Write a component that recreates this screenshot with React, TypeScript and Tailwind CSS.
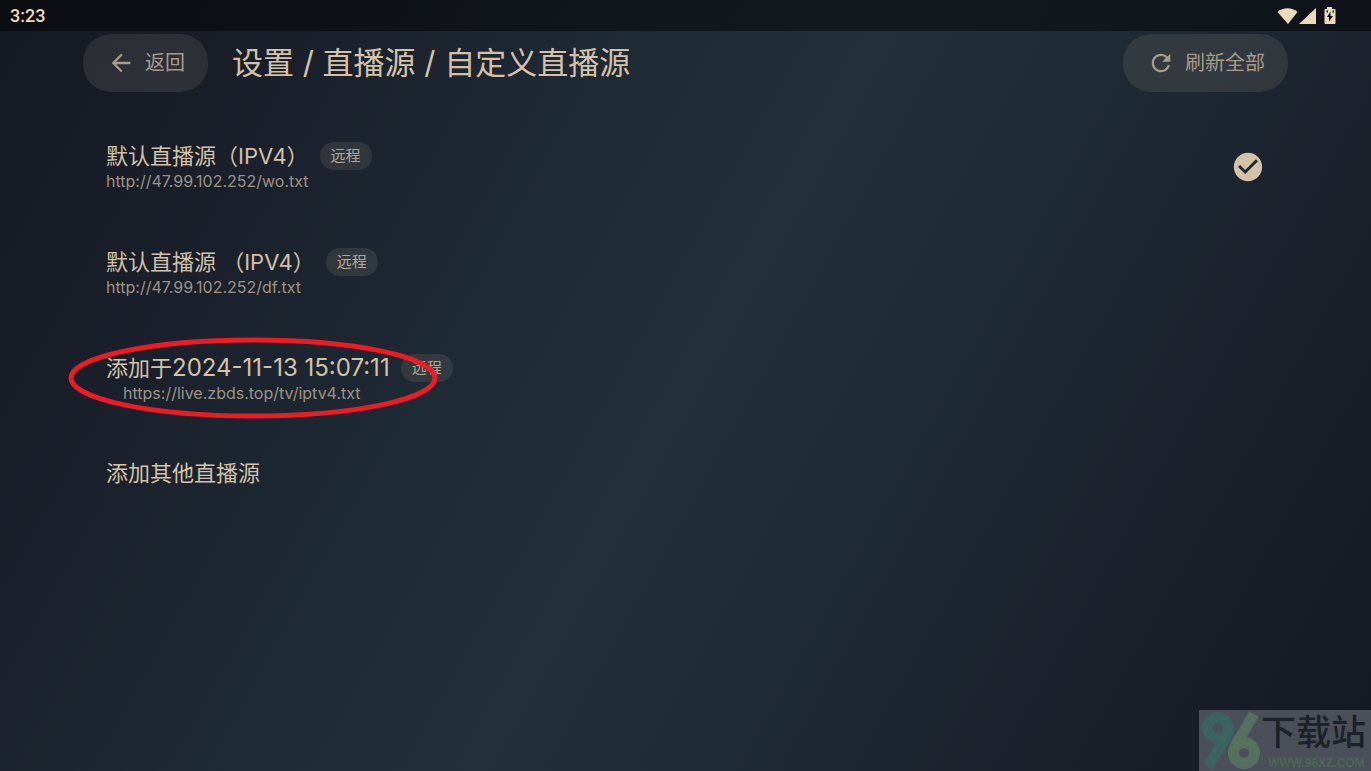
import { MdArrowBack, MdCheckCircle, MdRefresh } from "react-icons/md";

interface Source {
  name: string;
  addedAt?: string;
  url: string;
  selected?: boolean;
  indent?: boolean;
}

const sources: Source[] = [
  { name: "默认直播源（IPV4）", url: "http://47.99.102.252/wo.txt", selected: true },
  { name: "默认直播源 （IPV4）", url: "http://47.99.102.252/df.txt" },
  { name: "添加于", addedAt: "2024-11-13 15:07:11", url: "https://live.zbds.top/tv/iptv4.txt", indent: true },
];

export default function App() {
  return (
    <div className="relative min-h-screen overflow-hidden bg-[linear-gradient(119deg,#141822_0%,#1b212c_20%,#1e2a34_36%,#22303b_50%,#1e2a34_64%,#1b202b_82%,#141822_100%)] font-['Inter','Noto_Sans_CJK_SC',sans-serif] text-[#d3c2a7]">
      <StatusBar />

      <header className="flex items-center gap-6 px-[83px] pt-[3px]">
        <button className="flex h-[58px] items-center gap-[10px] rounded-[28px] bg-[#e9d6b8]/10 pr-[23px] pl-6 text-xl text-[#a79c8a]">
          <MdArrowBack className="size-7" />
          返回
        </button>
        <h1 className="flex-1 text-[31px] leading-[46px]">设置 / 直播源 / 自定义直播源</h1>
        <button className="flex h-[58px] items-center gap-[10px] rounded-[28px] bg-[#e9d6b8]/10 pr-[23px] pl-6 text-xl text-[#a79c8a]">
          <MdRefresh className="size-7" />
          刷新全部
        </button>
      </header>

      <main className="px-[106px] pt-12">
        <ul>
          {sources.map((source) => (
            <SourceRow key={source.url} source={source} />
          ))}
        </ul>
        <button className="text-[22px] leading-[30px]">添加其他直播源</button>
      </main>

      <Highlight />
      <Watermark />
    </div>
  );
}

function StatusBar() {
  return (
    <div className="flex h-[31px] items-center justify-between bg-black/45 pr-[35px] pl-[10px] text-[#ecdabd]">
      <span className="font-['Roboto',sans-serif] text-lg font-medium">3:23</span>
      <svg className="h-[18px] w-[59px]" viewBox="0 0 59 18" fill="currentColor" aria-hidden="true">
        {/* wifi */}
        <path d="M0.5 5C6 0 15 0 20.500 5L11 17Z" />
        {/* signal */}
        <path d="M22 17L39 1V17Z" />
        {/* charging battery */}
        <path
          fillRule="evenodd"
          d="M50 0h5v2h2.500q1 0 1 1v13q0 1-1 1h-9q-1 0-1-1V3q0-1 1-1H50zM53.500 4.500L50 10H52V14.500L56 9H53.500zM49.500 3.500v2h1.500v-2zM55.500 3.500v2h1.500v-2z"
        />
      </svg>
    </div>
  );
}

function SourceRow({ source }: { source: Source }) {
  return (
    <li className="flex h-[106px] items-start justify-between">
      <div>
        <div className="flex h-8 items-center gap-[11px]">
          <span className="text-[22px] leading-8">
            {source.name}
            {source.addedAt && <time className="text-2xl leading-8">{source.addedAt}</time>}
          </span>
          <span className="rounded-full bg-[#e9d6b8]/10 px-[11px] text-[15px] leading-7 text-[#b5a893]">
            远程
          </span>
        </div>
        <div className={source.indent ? "pl-[17px] leading-[18px] text-[#9c9384]" : "leading-[18px] text-[#9c9384]"}>
          {source.url}
        </div>
      </div>
      {source.selected && <MdCheckCircle className="mt-[10px] size-[34px]" aria-label="已选择" />}
    </li>
  );
}

function Highlight() {
  return (
    <svg
      className="pointer-events-none absolute top-[336px] left-[67px] h-[84px] w-[372px]"
      viewBox="0 0 372 84"
      fill="none"
      aria-hidden="true"
    >
      <ellipse cx="186" cy="42" rx="182" ry="38" stroke="#ed1c24" strokeWidth="5" />
    </svg>
  );
}

function Watermark() {
  return (
    <div className="absolute right-0 bottom-0 flex h-[61px] w-[172px] bg-[#4b4f59]">
      <svg className="h-[61px] w-[62px] shrink-0" viewBox="0 0 62 61" fill="none" aria-hidden="true">
        <g stroke="#3a625e" strokeWidth="11">
          <circle cx="19" cy="18" r="10.500" />
          <path d="M29 23L9 57" />
        </g>
        <g stroke="#54705c" strokeWidth="11">
          <circle cx="45" cy="43" r="10.500" />
          <path d="M35 38L55 4" />
        </g>
        {/* ribbon lines */}
        <g stroke="#456b67" strokeWidth="0.5">
          <circle cx="19" cy="18" r="8" />
          <circle cx="19" cy="18" r="10.500" />
          <circle cx="19" cy="18" r="13" />
          <path d="M26.500 22L7 55.500M29 23L9 57M31.500 24L11.500 58.500" />
        </g>
        <g stroke="#5d7865" strokeWidth="0.5">
          <circle cx="45" cy="43" r="8" />
          <circle cx="45" cy="43" r="10.500" />
          <circle cx="45" cy="43" r="13" />
          <path d="M32.500 37L52.500 3M35 38L55 4M37.500 39L57 5.500" />
        </g>
      </svg>
      <div className="flex flex-col whitespace-nowrap">
        <span className="text-[35px] leading-[45px] font-medium text-[#1d2128]">下载站</span>
        <span className="pl-[7px] font-['Liberation_Sans',sans-serif] text-xs leading-4 font-bold text-[#4c6655]">
          WWW.96XZ.COM
        </span>
      </div>
    </div>
  );
}
